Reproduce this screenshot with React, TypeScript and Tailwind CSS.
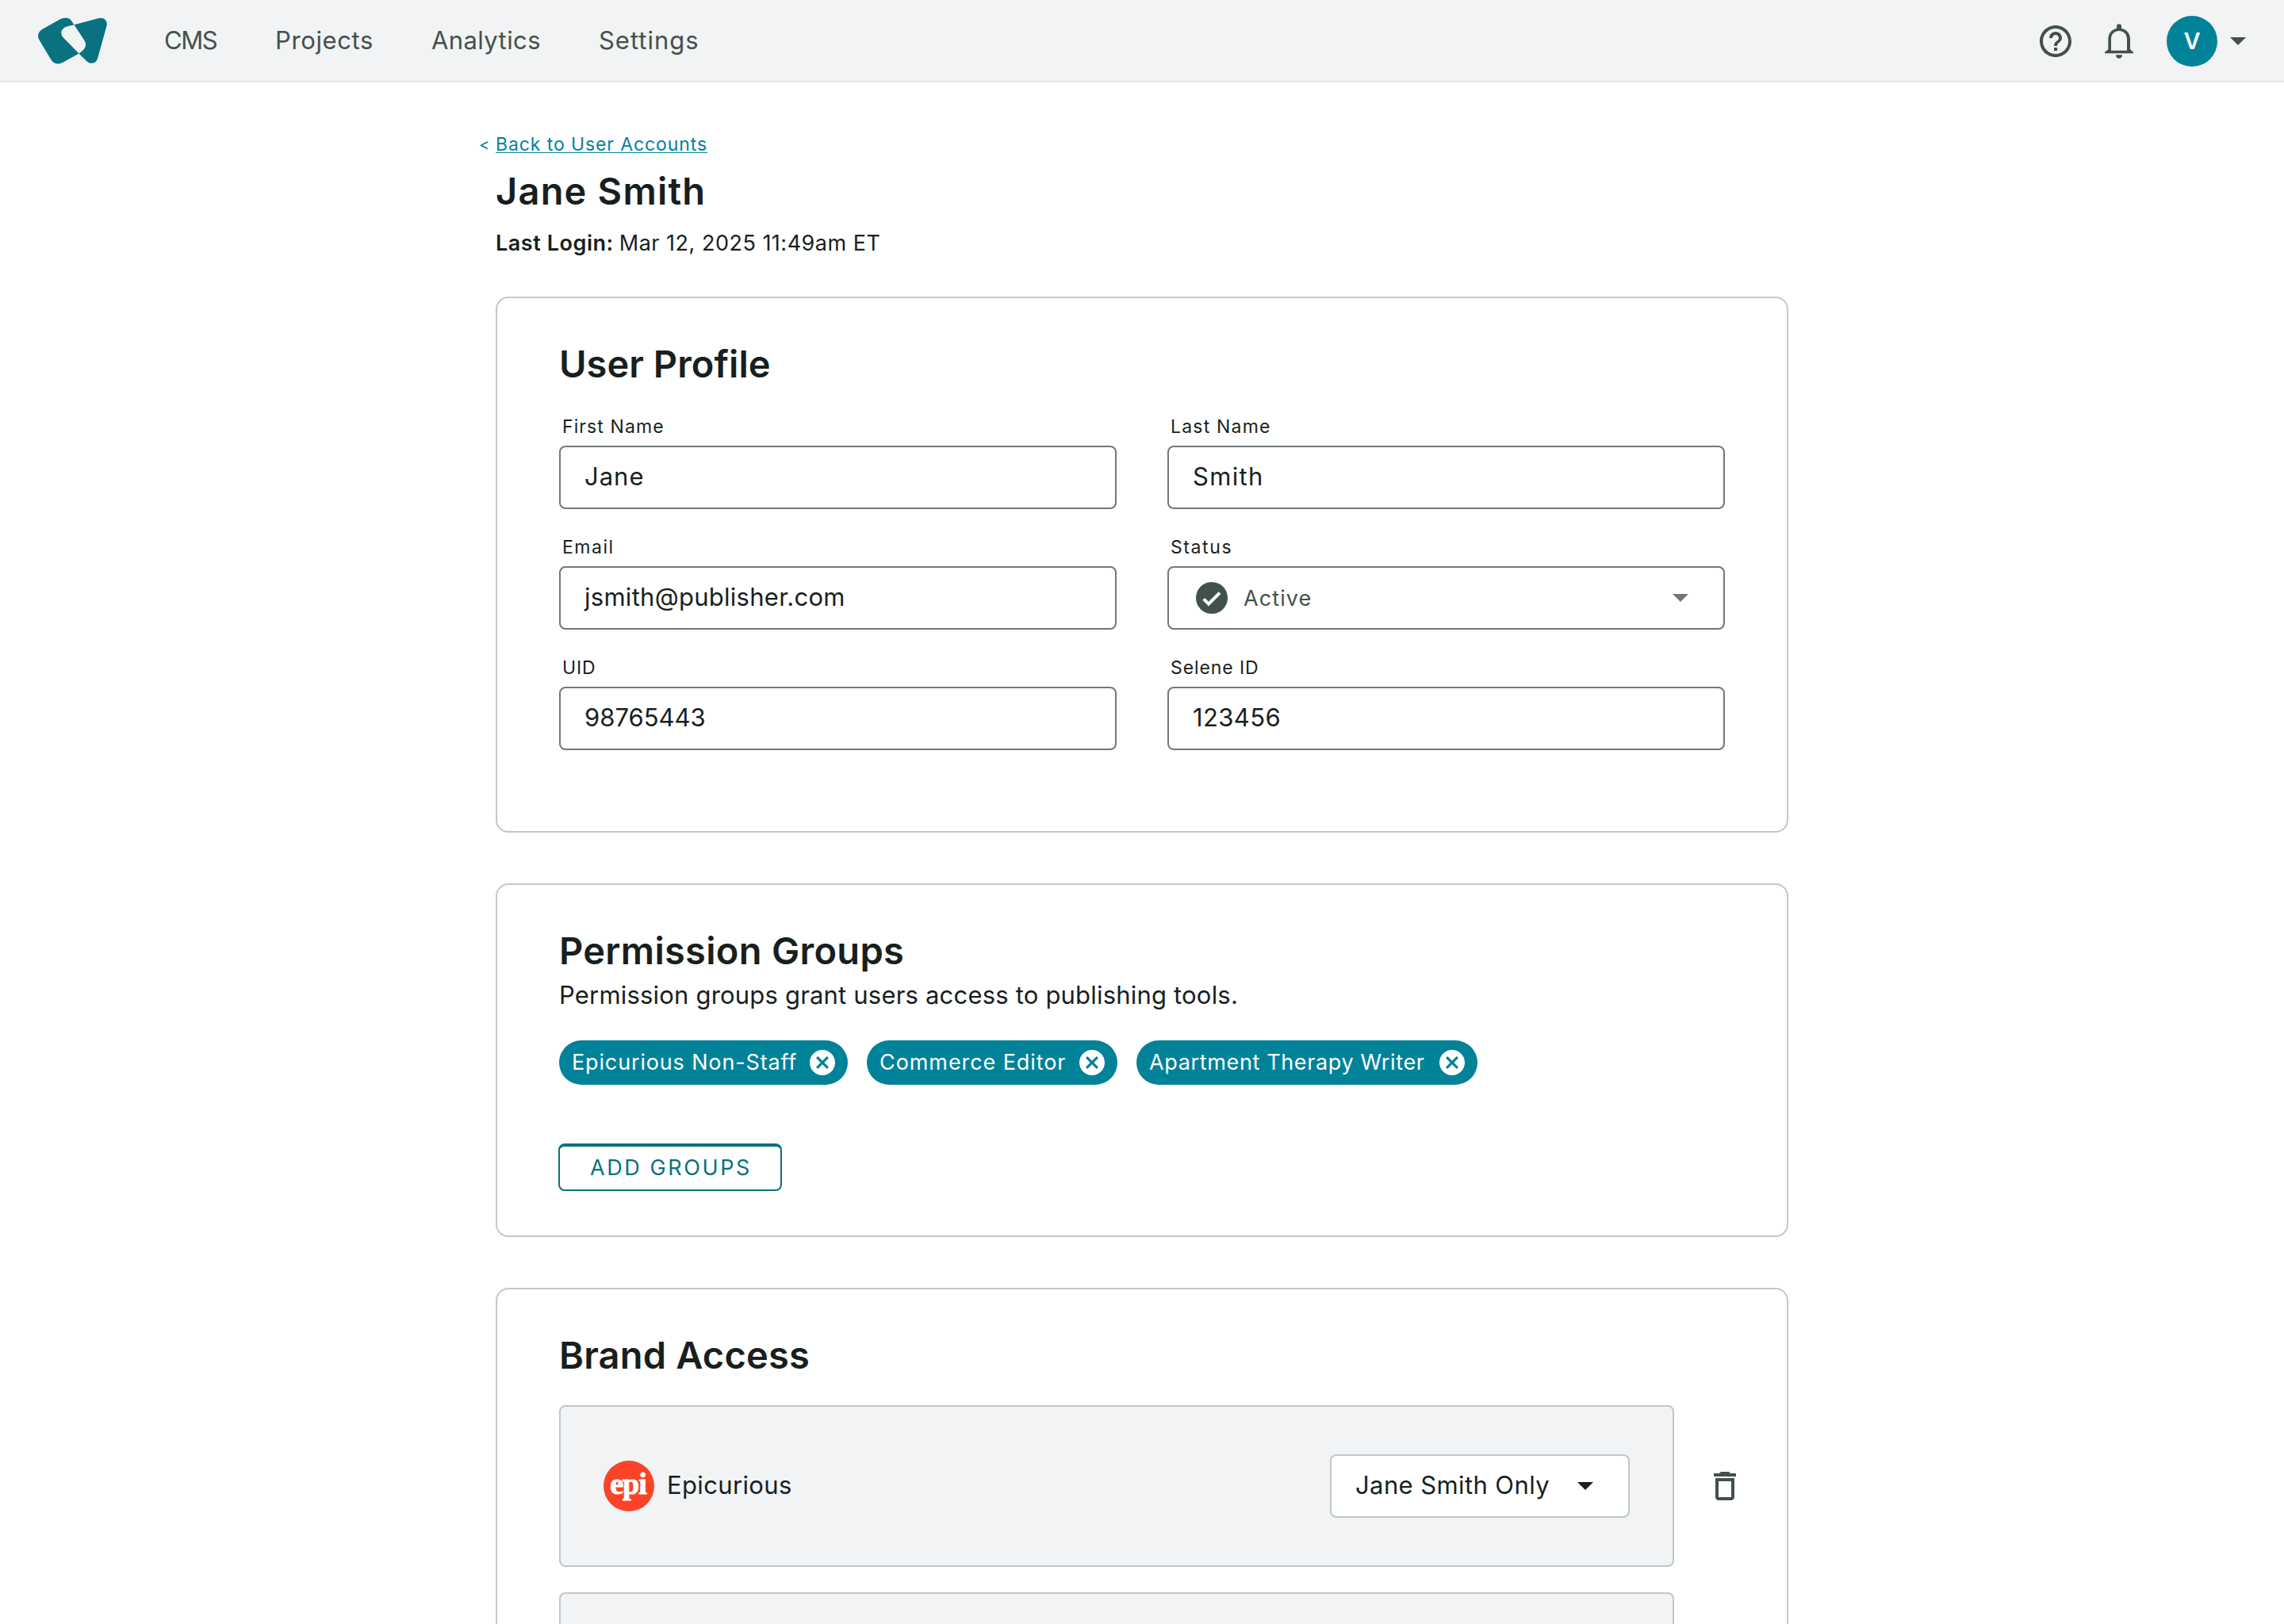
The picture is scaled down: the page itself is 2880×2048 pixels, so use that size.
import type { ReactNode } from "react";

function Logo() {
  return (
    <svg viewBox="54 40 262 176" className="h-[59px] w-[87px] fill-[#09717f]" aria-hidden="true">
      <path d="M191 67L180 51Q172 41 158 41Q148 41 138 46L72 83Q54 93 54 110Q54 118 60 127L102 197Q112 215 129 215Q138 215 148 210L209 176L150 116Q142 108 142 97Q143 80 165 73Z" />
      <path d="M191 67L281 43Q298 39 307 46Q317 54 315 69L281 192Q275 213 258 213Q247 214 238 205L209 176Q235 160 235 144Q235 134 229 125Z" />
    </svg>
  );
}

function HelpIcon() {
  return (
    <svg viewBox="2 2 20 20" className="size-10 fill-[#42514b]" aria-hidden="true">
      <path d="M11 18h2v-2h-2v2zm1-16C6.48 2 2 6.48 2 12s4.48 10 10 10 10-4.48 10-10S17.52 2 12 2zm0 18c-4.41 0-8-3.59-8-8s3.59-8 8-8 8 3.59 8 8-3.59 8-8 8zm0-14c-2.21 0-4 1.79-4 4h2c0-1.100.9-2 2-2s2 .9 2 2c0 2-3 1.750-3 5h2c0-2.250 3-2.500 3-5 0-2.210-1.790-4-4-4z" />
    </svg>
  );
}

function BellIcon() {
  return (
    <svg viewBox="282 42 108 132" className="h-11 w-9 fill-[#42514b]" aria-hidden="true">
      <path
        fillRule="evenodd"
        d="M327 52a9 9 0 0 1 18 0v7c20 4 33 20 33 40v40l12 10v5H282v-5l13-10V99c0-20 13-36 32-40ZM336 69c-17 0-30 13-30 30v44h60V99c0-17-13-30-30-30Z"
      />
      <path d="M324 160h24c0 8-5 13-12 13s-12-5-12-13Z" />
    </svg>
  );
}

function CheckCircleIcon() {
  return (
    <svg viewBox="0 0 40 40" className="size-10" aria-hidden="true">
      <circle cx="20" cy="20" r="20" fill="#42514b" />
      <path d="M9.700 21.300L16 27.600L30 13.600" fill="none" stroke="#fff" strokeWidth="4" />
    </svg>
  );
}

function RemoveIcon() {
  return (
    <svg viewBox="2 2 20 20" className="size-8 fill-white" aria-hidden="true">
      <path d="M12 2C6.470 2 2 6.470 2 12s4.470 10 10 10 10-4.470 10-10S17.530 2 12 2zm5 13.590L15.590 17 12 13.410 8.410 17 7 15.590 10.590 12 7 8.410 8.410 7 12 10.590 15.590 7 17 8.410 13.410 12 17 15.590z" />
    </svg>
  );
}

function TrashIcon() {
  return (
    <svg viewBox="5 3 14 18" className="h-9 w-7 fill-[#42514b]" aria-hidden="true">
      <path d="M6 19c0 1.100.9 2 2 2h8c1.100 0 2-.9 2-2V7H6v12zM8 9h8v10H8V9zm7.500-5l-1-1h-5l-1 1H5v2h14V4z" />
    </svg>
  );
}

function Caret({ className }: { className: string }) {
  return (
    <svg viewBox="0 0 20 10" className={"h-2.5 w-5 " + className} aria-hidden="true">
      <path d="M0 0h20L10 10Z" />
    </svg>
  );
}

const navItems = [
  { label: "CMS", className: "w-[140px] tracking-[-1.5px]" },
  { label: "Projects", className: "w-[197px] tracking-[0.62px]" },
  { label: "Analytics", className: "w-[211px] tracking-[0.39px]" },
  { label: "Settings", className: "tracking-[0.98px]" },
];

function Header() {
  return (
    <header className="flex h-[104px] items-center border-b-2 border-[#e7e8e8] bg-[#f1f3f5] px-12 text-[31px] leading-10 text-[#42514b]">
      <Logo />
      <nav className="ml-[72px] flex">
        {navItems.map((item) => (
          <a key={item.label} className={item.className}>
            {item.label}
          </a>
        ))}
      </nav>
      <div className="ml-auto flex items-center pt-0.5">
        <HelpIcon />
        <div className="ml-[42px]">
          <BellIcon />
        </div>
        <div className="ml-[42px] flex size-16 items-center justify-center rounded-full bg-[#008299] text-[29px] font-semibold text-white">
          V
        </div>
        <Caret className="ml-4 fill-[#42514b]" />
      </div>
    </header>
  );
}

function Card({ title, titleClass, className, children }: { title: string; titleClass: string; className: string; children: ReactNode }) {
  return (
    <section className={"shrink-0 rounded-2xl border-2 border-[#bec8ca] px-[78px] pt-[55px] " + className}>
      <h2 className={"pb-px text-[47px] leading-14 font-semibold " + titleClass}>{title}</h2>
      {children}
    </section>
  );
}

function Field({ label, labelClass, children }: { label: string; labelClass: string; children: ReactNode }) {
  return (
    <label className="flex flex-col gap-2">
      <span className={"pl-1 text-[23px] leading-8 " + labelClass}>{label}</span>
      <span className="flex h-20 items-center rounded-lg border-2 border-[#6f797c] px-[30px] text-[31px] leading-10">
        {children}
      </span>
    </label>
  );
}

const groups = [
  { name: "Epicurious Non-Staff", className: "w-[364px] tracking-[0.85px]" },
  { name: "Commerce Editor", className: "w-[316px] tracking-[0.92px]" },
  { name: "Apartment Therapy Writer", className: "w-[430px] tracking-[0.64px]" },
];

function BrandRow({ children }: { children?: ReactNode }) {
  return (
    <div className="flex h-[204px] w-[1406px] shrink-0 items-center justify-between rounded-lg border-2 border-[#bec8ca] bg-[#f1f3f5] px-[54px] text-[31px] leading-10">
      {children}
    </div>
  );
}

export default function App() {
  return (
    <div className="h-[2048px] overflow-hidden bg-white font-['Inter',sans-serif] text-[#181f1e]">
      <Header />
      <main className="mx-auto flex w-[1630px] flex-col pt-[62px]">
        <div className="-ml-[21px] flex text-[23px] leading-8 text-[#00829b]">
          <span className="w-[21px] text-[20px]">&lt;</span>
          <a className="tracking-[0.9px] underline decoration-1 underline-offset-2">Back to User Accounts</a>
        </div>
        <h1 className="mt-[15px] text-[47px] leading-14 font-semibold tracking-[1.2px]">Jane Smith</h1>
        <p className="mt-[18px] flex text-[27px] leading-10">
          <strong className="font-semibold tracking-[0.55px]">Last Login:</strong>
          <span className="ml-[7px] tracking-[0.5px]">Mar 12, 2025 11:49am ET</span>
        </p>

        <div className="mt-[47px] flex flex-col gap-16">
          <Card title="User Profile" titleClass="tracking-[0.03px]" className="h-[676px]">
            <div className="mt-[34px] grid grid-cols-2 gap-x-16 gap-y-8">
              <Field label="First Name" labelClass="tracking-[1.1px]">
                <span className="pb-0.5 tracking-[1px]">Jane</span>
              </Field>
              <Field label="Last Name" labelClass="tracking-[1.2px]">
                <span className="pb-0.5 tracking-[1.3px]">Smith</span>
              </Field>
              <Field label="Email" labelClass="tracking-[1.5px]">
                <span className="pb-0.5 tracking-[0.28px]">jsmith@publisher.com</span>
              </Field>
              <Field label="Status" labelClass="tracking-[1.6px]">
                <span className="flex grow items-center pr-3.5 pl-1">
                  <CheckCircleIcon />
                  <span className="ml-5 pt-0.5 text-[27px] tracking-[1.1px] text-[#42514b]">Active</span>
                  <Caret className="ml-auto fill-[#6f797c]" />
                </span>
              </Field>
              <Field label="UID" labelClass="tracking-[0.9px]">
                <span className="pb-0.5">98765443</span>
              </Field>
              <Field label="Selene ID" labelClass="tracking-[0.9px]">
                <span className="pb-0.5 tracking-[0.4px]">123456</span>
              </Field>
            </div>
          </Card>

          <Card title="Permission Groups" titleClass="tracking-[0.3px]" className="h-[446px]">
            <p className="mt-[7px] text-[31px] leading-10 tracking-[0.19px]">
              Permission groups grant users access to publishing tools.
            </p>
            <ul className="mt-[37px] flex gap-6">
              {groups.map((group) => (
                <li
                  key={group.name}
                  className={"flex h-14 items-center justify-between rounded-full bg-[#008299] px-4 text-[27px] whitespace-nowrap text-white " + group.className}
                >
                  <span className="pt-px">{group.name}</span>
                  <RemoveIcon />
                </li>
              ))}
            </ul>
            <button className="mt-[74px] -ml-px h-[60px] w-[282px] rounded-lg border-2 border-t-4 border-[#09717f] pl-0.5 text-[27px] leading-9 tracking-[2.6px] text-[#09717f]">
              ADD GROUPS
            </button>
          </Card>

          <Card title="Brand Access" titleClass="tracking-[0.18px]" className="h-[700px]">
            <div className="mt-[34px] flex flex-col gap-8">
              <div className="flex items-center">
                <BrandRow>
                  <div className="flex items-center">
                    <span className="flex size-16 items-center justify-center rounded-full bg-[#fa4427] pr-0.5 pb-1.5 font-['Liberation_Serif',serif] text-[38px] leading-none font-bold tracking-[-1px] text-white [-webkit-text-stroke:1px_white]">
                      epi
                    </span>
                    <span className="ml-4 pb-0.5 tracking-[0.35px]">Epicurious</span>
                  </div>
                  <div className="flex h-20 w-[378px] items-center rounded-lg border-2 border-[#bec8ca] bg-white pl-[30px]">
                    <span className="w-[246px] pb-0.5 tracking-[0.4px]">Jane Smith Only</span>
                    <Caret className="ml-[34px] fill-[#181f1e]" />
                  </div>
                </BrandRow>
                <button className="ml-[50px]">
                  <TrashIcon />
                </button>
              </div>
              <BrandRow />
            </div>
          </Card>
        </div>
      </main>
    </div>
  );
}
